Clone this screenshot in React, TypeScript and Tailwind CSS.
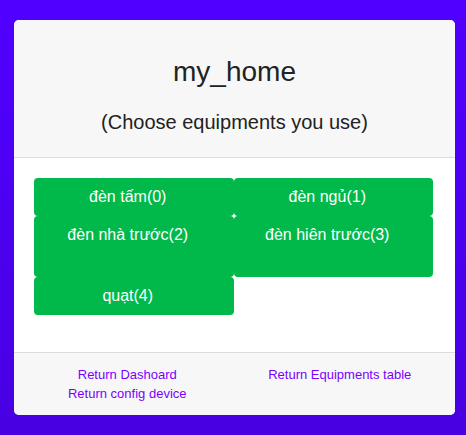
const devices = [
  { name: 'đèn tấm', id: 0, tall: false },
  { name: 'đèn ngủ', id: 1, tall: false },
  { name: 'đèn nhà trước', id: 2, tall: true },
  { name: 'đèn hiên trước', id: 3, tall: true },
  { name: 'quạt', id: 4, tall: false },
];

export default function App() {
  return (
    <div className="min-h-[435px] bg-gradient-to-b from-[#5000ff] to-[#4800e2] pl-[14px] pr-[11px] pt-[20px] pb-[21px] font-['Liberation_Sans',Arial,sans-serif]">
      <div className="rounded-[5px] bg-white overflow-hidden">
        {/* Header */}
        <div className="bg-[#f7f7f7] border-b border-[#dcdcdc] h-[138px] flex flex-col items-center text-[#222]">
          <h1 className="text-[28px] leading-[32px] mt-[36px]">my_home</h1>
          <p className="text-[20px] leading-[24px] mt-[22px]">(Choose equipments you use)</p>
        </div>

        {/* Equipments */}
        <div className="pl-[20px] pr-[22px] pt-[20px] pb-[37px]">
          <div className="grid grid-cols-2">
            {devices.map(d => (
              <button
                key={d.id}
                className={`bg-[#00b94a] text-white text-[16px] leading-[22px] rounded-[4px] pt-[8px] pr-[12px] flex justify-center items-start ${d.tall ? 'h-[61px]' : 'h-[38px]'}`}
              >
                {d.name}({d.id})
              </button>
            ))}
          </div>
        </div>

        {/* Footer */}
        <div className="bg-[#f7f7f7] border-t border-[#dcdcdc] h-[63px] pl-[7px] pr-[9px] pt-[12px] grid grid-cols-2 text-[13px] leading-[19px] text-[#7a00ff]">
          <div className="flex flex-col items-center">
            <a href="#">Return Dashoard</a>
            <a href="#">Return config device</a>
          </div>
          <div className="flex flex-col items-center">
            <a href="#">Return Equipments table</a>
          </div>
        </div>
      </div>
    </div>
  );
}
